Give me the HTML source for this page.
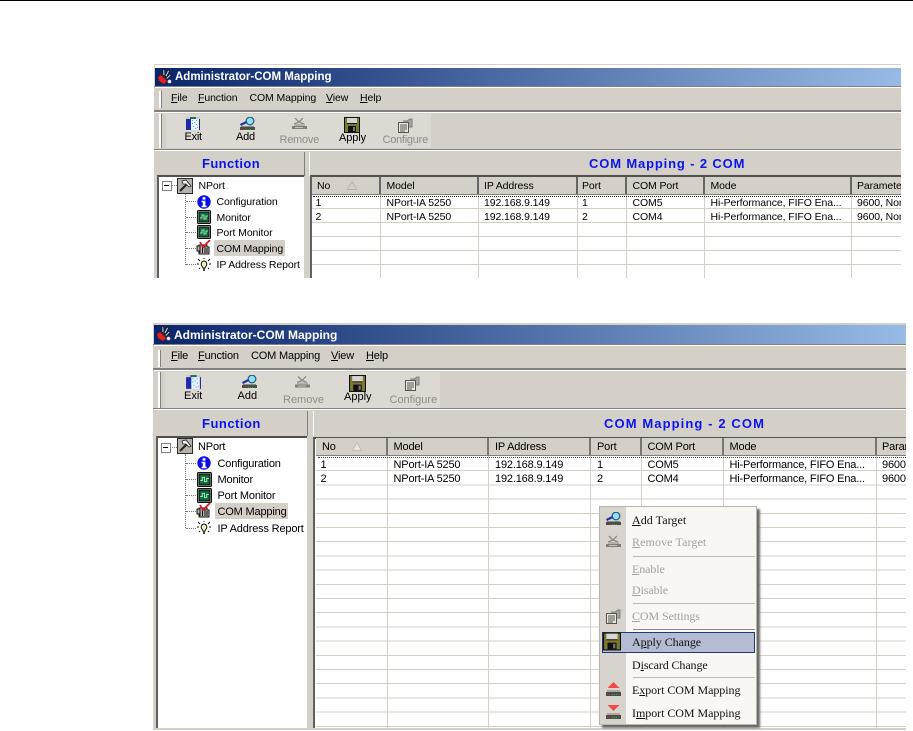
<!DOCTYPE html>
<html><head><meta charset="utf-8"><title>Administrator-COM Mapping</title>
<style>
html,body{margin:0;padding:0;background:#fff}
#p{position:relative;width:913px;height:731px;overflow:hidden;background:#fff;font-family:"Liberation Sans",sans-serif}
#p div{position:absolute}
.t{white-space:nowrap;font-size:10.5px;line-height:14px;color:#000;letter-spacing:-.1px;margin-top:1px}
.w2 .t{font-size:11px;letter-spacing:-.17px}
.g{color:#8f8d87}
.b{font-weight:bold;font-size:13px;line-height:16px;color:#0a14f0;white-space:nowrap}
.m{font-family:"Liberation Serif",serif;font-size:12px;line-height:14px;white-space:nowrap;color:#111}
.d{color:#a3a19c}
u{text-decoration-thickness:1px;text-underline-offset:1px}
svg{position:absolute;overflow:visible}
.w2{filter:blur(.35px)}
</style></head><body>
<div id="p">
<svg width="0" height="0" style="position:absolute">
<defs>
<symbol id="exit" viewBox="0 0 16 14"><rect x="1" y="0" width="14" height="2" fill="#cfccc5"/><rect x="5" y="0" width="6" height="2" fill="#1f6f57"/><rect x="1" y="2" width="5" height="11" fill="#1d2aa8"/><rect x="6" y="2" width="8" height="11" fill="#e6f3fb"/><path d="M7 3h1v1H7zM9 5h1v1H9zM7 6h1v1H7zM11 3h1v1h-1zM11 7h1v1h-1zM8 9h1v1H8zM12 10h1v1h-1zM10 11h1v1h-1z" fill="#59a5e0"/><rect x="14" y="2" width="1" height="11" fill="#1d1f9c"/></symbol>
<symbol id="add" viewBox="0 0 15 14"><circle cx="10" cy="4" r="3.800" fill="#8fe4ee" stroke="#255f92" stroke-width="1.300"/><path d="M0 7l6-3 1 2-6 3z" fill="#1c34a8"/><rect x="1" y="9" width="13" height="1" fill="#8b8a85"/><rect x="0" y="10" width="15" height="3" fill="#4c4c48"/><path d="M3 12h1v1H3z" fill="#e02020"/><path d="M6 12h1v1H6zM8 12h1v1H8zM10 12h1v1h-1z" fill="#22b522"/></symbol>
<symbol id="rem" viewBox="0 0 15 12"><path d="M3 0l4 4 4-4M2 6l5-2 5 2" fill="none" stroke="#8d8b86" stroke-width="1.300"/><rect x="2" y="6" width="11" height="2" fill="#b2b0aa"/><rect x="0" y="8" width="15" height="3" fill="#7f7e79"/><rect x="3" y="9" width="8" height="1" fill="#c4c2bc"/></symbol>
<symbol id="fl" viewBox="0 0 16 16"><rect x=".5" y=".5" width="15" height="15" fill="#7c7a2c" stroke="#111"/><rect x="3" y="1" width="10" height="6" fill="#d7d5cf"/><rect x="3" y="6" width="10" height="1" fill="#111"/><rect x="4" y="9" width="8" height="6" fill="#111"/><rect x="9" y="10" width="2" height="4" fill="#777"/></symbol>
<symbol id="cfg" viewBox="0 0 15 15"><path d="M5 3h4l3-2h2v8h-3" fill="#a8a6a0" stroke="#7f7e79"/><rect x=".5" y="4.500" width="10" height="10" fill="#e9e7e2" stroke="#55544e"/><path d="M2 7h7M2 9h7M2 11h7M2 13h5" stroke="#55544e"/></symbol>
<symbol id="np" viewBox="0 0 16 16"><rect x=".5" y=".5" width="15" height="15" fill="#b5b2ab" stroke="#2b2b2b"/><path d="M3 13L11 5" stroke="#222" stroke-width="2"/><path d="M5 3l4-1 5 6-2 1-3-3-3 0z" fill="#f4f4f0" stroke="#222" stroke-width=".8"/></symbol>
<symbol id="inf" viewBox="0 0 14 14"><circle cx="7" cy="7" r="6.700" fill="#0c10e8"/><rect x="5.600" y="2.200" width="2.800" height="2.400" fill="#fff"/><path d="M4.600 5.800h3.800v5h1.200v1.400H4.600v-1.400h1.200V7.200H4.600z" fill="#fff"/></symbol>
<symbol id="mon" viewBox="0 0 14 14"><rect x=".5" y=".5" width="13" height="13" rx="1" fill="#c4c2bc" stroke="#111"/><rect x="2" y="2" width="10" height="10" fill="#0b6a3c" stroke="#111"/><path d="M3 8h2V5h2v4h2V6h2" fill="none" stroke="#a6e0b0"/></symbol>
<symbol id="hand" viewBox="0 0 15 15"><path d="M1 6h2V5h8v2h2v7H3V11H1z" fill="#b9b6ae" stroke="#111"/><path d="M4 6v7M6.500 6v7M9 6v7M11 8v5" stroke="#111"/><path d="M4 2l3 5 7-7" fill="none" stroke="#e0101c" stroke-width="1.700"/></symbol>
<symbol id="bulb" viewBox="0 0 14 14"><path d="M7 3a3 3 0 0 1 2 5l-1 2H6L5 8a3 3 0 0 1 2-5z" fill="#fff" stroke="#111"/><path d="M6 5h2l-1 5z" fill="#f4ee20"/><rect x="6" y="10" width="2" height="3" fill="#444"/><path d="M7 0v1M1 1l2 2M13 1l-2 2M0 6h2M12 6h2M2 11l1-1M12 11l-1-1" stroke="#111"/></symbol>
<symbol id="logo" viewBox="0 0 15 15"><path d="M6 6l0-6 1.500 1 .5 6zM8 7l3-6 1.500 1-3 6zM9 9l4-4 1 1.500-4 4z" fill="#c8c8c8" stroke="#111" stroke-width=".6"/><path d="M1 8l3-2 6 6-3 3-5-3z" fill="#e8201c" stroke="#8a1010" stroke-width=".5"/><circle cx="12.500" cy="12.500" r="1.800" fill="#eee" stroke="#999" stroke-width=".4"/></symbol>
<symbol id="exp" viewBox="0 0 15 15"><path d="M7.500 0l6 6h-12z" fill="#f14848"/><rect x="1" y="8" width="13" height="2" fill="#aaa89f"/><rect x="0" y="10" width="15" height="4" fill="#4c4c48"/><path d="M3 12h1v1H3z" fill="#e02020"/><path d="M6 12h1v1H6zM8 12h1v1H8zM10 12h1v1h-1z" fill="#22b522"/></symbol>
<symbol id="imp" viewBox="0 0 15 15"><path d="M1.500 0h12l-6 6z" fill="#f14848"/><rect x="1" y="8" width="13" height="2" fill="#aaa89f"/><rect x="0" y="10" width="15" height="4" fill="#4c4c48"/><path d="M3 12h1v1H3z" fill="#e02020"/><path d="M6 12h1v1H6zM8 12h1v1H8zM10 12h1v1h-1z" fill="#22b522"/></symbol>
</defs></svg>

<div style="left:0;top:0;width:913px;height:1px;background:#000"></div>

<!-- WINDOW 1 -->
<div style="left:154px;top:64px;width:747px;height:214px;background:#d4d0c8;overflow:hidden">
 <div style="left:1px;top:1px;width:746px;height:3px;background:#fff"></div>
 <div style="left:1px;top:4px;width:746px;height:18px;background:linear-gradient(90deg,#0a246a,#98bbe5)"></div>
 <div class="t" style="left:21px;top:5px;color:#fff;font-weight:bold;font-size:11.500px;letter-spacing:0">Administrator-COM Mapping</div>
 <div style="left:0;top:22px;width:747px;height:1px;background:#808080"></div>
 <div style="left:1px;top:23px;width:746px;height:1px;background:#fff"></div>
 <div style="left:0;top:46px;width:747px;height:2px;background:#808080"></div>
 <div style="left:1px;top:48px;width:746px;height:1px;background:#fff"></div>
 <div style="left:5px;top:27px;width:2px;height:17px;background:#fff;border-right:1px solid #808080"></div>
 <div style="left:12px;top:50px;width:265px;height:34px;background:#dcd9d2"></div>
 <div style="left:5px;top:50px;width:2px;height:34px;background:#fff;border-right:1px solid #808080"></div>
 <div style="left:0;top:85px;width:747px;height:1px;background:#808080"></div>
 <div style="left:1px;top:86px;width:746px;height:1px;background:#fff"></div>
 <div style="left:150px;top:88px;width:1px;height:24px;background:#808080"></div>
 <div style="left:155px;top:88px;width:1px;height:24px;background:#fff"></div>
 <div style="left:3px;top:111px;width:147px;height:103px;background:#fff;border-top:2px solid #505050;border-left:2px solid #606060;box-sizing:border-box"></div>
 <div style="left:156px;top:111px;width:591px;height:103px;background:#fff;border-top:2px solid #505050;border-left:2px solid #606060;box-sizing:border-box"></div>
</div>
<div class="t" style="left:171px;top:90px"><u>F</u>ile</div>
<div class="t" style="left:198px;top:90px"><u>F</u>unction</div>
<div class="t" style="left:249.500px;top:90px">COM Mapping</div>
<div class="t" style="left:326px;top:90px"><u>V</u>iew</div>
<div class="t" style="left:360px;top:90px"><u>H</u>elp</div>
<svg style="left:157px;top:69px" width="15" height="15"><use href="#logo"/></svg>
<svg style="left:185px;top:117px" width="16" height="14"><use href="#exit"/></svg>
<svg style="left:240px;top:117px" width="15" height="14"><use href="#add"/></svg>
<svg style="left:292px;top:118px" width="15" height="12"><use href="#rem"/></svg>
<svg style="left:344px;top:117px" width="16" height="16"><use href="#fl"/></svg>
<svg style="left:398px;top:118px" width="15" height="15"><use href="#cfg"/></svg>
<div class="t" style="left:184.500px;top:129px;font-size:11px;letter-spacing:-.25px">Exit</div>
<div class="t" style="left:236px;top:129px;font-size:11px;letter-spacing:-.25px">Add</div>
<div class="t g" style="left:279.500px;top:132px;font-size:11px;letter-spacing:-.25px">Remove</div>
<div class="t" style="left:339px;top:130px;font-size:11px;letter-spacing:-.1px">Apply</div>
<div class="t g" style="left:382.500px;top:132px;font-size:11px;letter-spacing:-.25px">Configure</div>
<div class="b" style="left:202px;top:156px;letter-spacing:.4px">Function</div>
<div class="b" style="left:589px;top:156px;letter-spacing:.85px">COM Mapping - 2 COM</div>

<!-- tree 1 -->
<div style="left:185px;top:193px;width:0;height:72px;border-left:1px dotted #777"></div>
<div style="left:170px;top:185px;width:7px;border-top:1px dotted #777"></div>
<div style="left:186px;top:201px;width:10px;border-top:1px dotted #777"></div>
<div style="left:186px;top:217px;width:10px;border-top:1px dotted #777"></div>
<div style="left:186px;top:232px;width:10px;border-top:1px dotted #777"></div>
<div style="left:186px;top:248px;width:10px;border-top:1px dotted #777"></div>
<div style="left:186px;top:264px;width:10px;border-top:1px dotted #777"></div>
<div style="left:162px;top:181px;width:8px;height:8px;border:1px solid #808080;background:#fff"></div>
<div style="left:164px;top:185px;width:5px;height:1px;background:#000"></div>
<svg style="left:177px;top:178px" width="16" height="16"><use href="#np"/></svg>
<svg style="left:197px;top:195px" width="14" height="14"><use href="#inf"/></svg>
<svg style="left:197px;top:210px" width="14" height="14"><use href="#mon"/></svg>
<svg style="left:197px;top:225px" width="14" height="14"><use href="#mon"/></svg>
<svg style="left:196px;top:240px" width="15" height="15"><use href="#hand"/></svg>
<svg style="left:197px;top:258px" width="14" height="14"><use href="#bulb"/></svg>
<div style="left:214px;top:240px;width:71px;height:16px;background:#d4d0c8"></div>
<div class="t" style="left:216.500px;top:194px">Configuration</div>
<div class="t" style="left:216.500px;top:210px">Monitor</div>
<div class="t" style="left:216.500px;top:225px">Port Monitor</div>
<div class="t" style="left:216.500px;top:241px">COM Mapping</div>
<div class="t" style="left:216.500px;top:257px">IP Address Report</div>
<div class="t" style="left:198.500px;top:178px">NPort</div>

<!-- list 1 -->
<div style="left:312px;top:177px;width:589px;height:17px;background:#d4d0c8;border-bottom:1px solid #808080"></div>
<div style="left:379px;top:177px;width:2px;height:17px;background:#666"></div>
<div style="left:477px;top:177px;width:2px;height:17px;background:#666"></div>
<div style="left:576px;top:177px;width:2px;height:17px;background:#666"></div>
<div style="left:625px;top:177px;width:2px;height:17px;background:#666"></div>
<div style="left:703px;top:177px;width:2px;height:17px;background:#666"></div>
<div style="left:850px;top:177px;width:2px;height:17px;background:#666"></div>
<div style="left:312px;top:195px;width:589px;height:83px;background:repeating-linear-gradient(180deg,#fff 0,#fff 13px,#d4d0c8 13px,#d4d0c8 14px)"></div>
<div style="left:380px;top:195px;width:1px;height:83px;background:#d4d0c8"></div>
<div style="left:478px;top:195px;width:1px;height:83px;background:#d4d0c8"></div>
<div style="left:577px;top:195px;width:1px;height:83px;background:#d4d0c8"></div>
<div style="left:626px;top:195px;width:1px;height:83px;background:#d4d0c8"></div>
<div style="left:704px;top:195px;width:1px;height:83px;background:#d4d0c8"></div>
<div style="left:851px;top:195px;width:1px;height:83px;background:#d4d0c8"></div>
<div style="left:313px;top:196px;width:588px;border-top:1px dotted #222"></div>
<div class="t" style="left:317px;top:178px">No</div>
<svg style="left:347px;top:181px" width="10" height="9"><path d="M5 .500L9.500 8.500H.5z" fill="none" stroke="#b5b2ab"/></svg>
<div class="t" style="left:386.500px;top:178px">Model</div>
<div class="t" style="left:484px;top:178px">IP Address</div>
<div class="t" style="left:582px;top:178px">Port</div>
<div class="t" style="left:632.500px;top:178px">COM Port</div>
<div class="t" style="left:710.500px;top:178px">Mode</div>
<div class="t" style="left:857px;top:178px;width:44px;overflow:hidden">Parameters</div>
<div class="t" style="left:315.500px;top:195px">1</div>
<div class="t" style="left:386.500px;top:195px">NPort-IA 5250</div>
<div class="t" style="left:484px;top:195px">192.168.9.149</div>
<div class="t" style="left:582px;top:195px">1</div>
<div class="t" style="left:632.500px;top:195px">COM5</div>
<div class="t" style="left:710.500px;top:195px">Hi-Performance, FIFO Ena...</div>
<div class="t" style="left:857px;top:195px;width:44px;overflow:hidden">9600, None</div>
<div class="t" style="left:315.500px;top:209px">2</div>
<div class="t" style="left:386.500px;top:209px">NPort-IA 5250</div>
<div class="t" style="left:484px;top:209px">192.168.9.149</div>
<div class="t" style="left:582px;top:209px">2</div>
<div class="t" style="left:632.500px;top:209px">COM4</div>
<div class="t" style="left:710.500px;top:209px">Hi-Performance, FIFO Ena...</div>
<div class="t" style="left:857px;top:209px;width:44px;overflow:hidden">9600, None</div>

<!-- WINDOW 2 -->
<div class="w2" style="left:0;top:0;width:913px;height:731px">
<div style="left:153px;top:323px;width:753px;height:407px;background:#d4d0c8;overflow:hidden">
 <div style="left:1px;top:2px;width:752px;height:19px;background:linear-gradient(90deg,#0a246a,#98bbe5)"></div>
 <div class="t" style="left:21px;top:4px;color:#fff;font-weight:bold;font-size:12px;letter-spacing:0">Administrator-COM Mapping</div>
 <div style="left:0;top:21px;width:753px;height:1px;background:#808080"></div>
 <div style="left:1px;top:22px;width:752px;height:1px;background:#fff"></div>
 <div style="left:0;top:45px;width:753px;height:2px;background:#808080"></div>
 <div style="left:1px;top:47px;width:752px;height:1px;background:#fff"></div>
 <div style="left:5px;top:27px;width:2px;height:17px;background:#fff;border-right:1px solid #808080"></div>
 <div style="left:12px;top:49px;width:275px;height:36px;background:#dcd9d2"></div>
 <div style="left:5px;top:49px;width:2px;height:36px;background:#fff;border-right:1px solid #808080"></div>
 <div style="left:0;top:85px;width:753px;height:1px;background:#808080"></div>
 <div style="left:1px;top:86px;width:752px;height:1px;background:#fff"></div>
 <div style="left:154px;top:88px;width:1px;height:25px;background:#808080"></div>
 <div style="left:160px;top:88px;width:1px;height:25px;background:#fff"></div>
 <div style="left:3px;top:113px;width:151px;height:292px;background:#fff;border-top:2px solid #505050;border-left:2px solid #606060;box-sizing:border-box"></div>
 <div style="left:160px;top:114px;width:593px;height:291px;background:#fff;border-top:2px solid #505050;border-left:2px solid #606060;box-sizing:border-box"></div>
</div>
<div class="t" style="left:171px;top:348px"><u>F</u>ile</div>
<div class="t" style="left:198px;top:348px"><u>F</u>unction</div>
<div class="t" style="left:251px;top:348px">COM Mapping</div>
<div class="t" style="left:331px;top:348px"><u>V</u>iew</div>
<div class="t" style="left:366px;top:348px"><u>H</u>elp</div>
<svg style="left:156px;top:326px" width="15" height="15"><use href="#logo"/></svg>
<svg style="left:185px;top:375px" width="17" height="15"><use href="#exit"/></svg>
<svg style="left:242px;top:375px" width="15" height="14"><use href="#add"/></svg>
<svg style="left:295px;top:376px" width="15" height="13"><use href="#rem"/></svg>
<svg style="left:349px;top:375px" width="17" height="17"><use href="#fl"/></svg>
<svg style="left:405px;top:376px" width="15" height="15"><use href="#cfg"/></svg>
<div class="t" style="left:184px;top:388px;letter-spacing:0">Exit</div>
<div class="t" style="left:237.500px;top:388px;letter-spacing:0">Add</div>
<div class="t g" style="left:283px;top:391.500px;letter-spacing:0">Remove</div>
<div class="t" style="left:344px;top:389px;letter-spacing:0">Apply</div>
<div class="t g" style="left:389.500px;top:391.500px;letter-spacing:0">Configure</div>
<div class="b" style="left:202px;top:416px;letter-spacing:.5px">Function</div>
<div class="b" style="left:604px;top:416px;letter-spacing:1.100px">COM Mapping - 2 COM</div>

<div style="left:185px;top:454px;width:0;height:74px;border-left:1px dotted #777"></div>
<div style="left:169px;top:447px;width:8px;border-top:1px dotted #777"></div>
<div style="left:186px;top:463px;width:10px;border-top:1px dotted #777"></div>
<div style="left:186px;top:479px;width:10px;border-top:1px dotted #777"></div>
<div style="left:186px;top:495px;width:10px;border-top:1px dotted #777"></div>
<div style="left:186px;top:511px;width:10px;border-top:1px dotted #777"></div>
<div style="left:186px;top:528px;width:10px;border-top:1px dotted #777"></div>
<div style="left:161px;top:443px;width:8px;height:8px;border:1px solid #808080;background:#fff"></div>
<div style="left:163px;top:447px;width:5px;height:1px;background:#000"></div>
<svg style="left:177px;top:438px" width="16" height="16"><use href="#np"/></svg>
<svg style="left:197px;top:456px" width="14" height="14"><use href="#inf"/></svg>
<svg style="left:197px;top:472px" width="15" height="15"><use href="#mon"/></svg>
<svg style="left:197px;top:488px" width="15" height="15"><use href="#mon"/></svg>
<svg style="left:196px;top:503px" width="15" height="15"><use href="#hand"/></svg>
<svg style="left:197px;top:521px" width="14" height="14"><use href="#bulb"/></svg>
<div style="left:215px;top:503px;width:73px;height:16px;background:#d4d0c8"></div>
<div class="t" style="left:217.500px;top:456px">Configuration</div>
<div class="t" style="left:217.500px;top:472px">Monitor</div>
<div class="t" style="left:217.500px;top:488px">Port Monitor</div>
<div class="t" style="left:217.500px;top:504px">COM Mapping</div>
<div class="t" style="left:217.500px;top:521px">IP Address Report</div>
<div class="t" style="left:198px;top:439px">NPort</div>

<div style="left:316px;top:438px;width:590px;height:17px;background:#d4d0c8;border-bottom:1px solid #808080"></div>
<div style="left:386px;top:438px;width:2px;height:17px;background:#777"></div>
<div style="left:487px;top:438px;width:2px;height:17px;background:#777"></div>
<div style="left:589px;top:438px;width:2px;height:17px;background:#777"></div>
<div style="left:640px;top:438px;width:2px;height:17px;background:#777"></div>
<div style="left:722px;top:438px;width:2px;height:17px;background:#777"></div>
<div style="left:875px;top:438px;width:2px;height:17px;background:#777"></div>
<div style="left:316px;top:457px;width:590px;height:271px;background:repeating-linear-gradient(180deg,#fff 0,#fff 13.200px,#d4d0c8 13.200px,#d4d0c8 14.200px)"></div>
<div style="left:387px;top:456px;width:1px;height:272px;background:#d4d0c8"></div>
<div style="left:488px;top:456px;width:1px;height:272px;background:#d4d0c8"></div>
<div style="left:590px;top:456px;width:1px;height:272px;background:#d4d0c8"></div>
<div style="left:641px;top:456px;width:1px;height:272px;background:#d4d0c8"></div>
<div style="left:723px;top:456px;width:1px;height:272px;background:#d4d0c8"></div>
<div style="left:876px;top:456px;width:1px;height:272px;background:#d4d0c8"></div>
<div style="left:318px;top:457px;width:588px;border-top:1px dotted #444"></div>
<div class="t" style="left:322px;top:439px">No</div>
<svg style="left:352px;top:442px" width="10" height="9"><path d="M5 .500L9.500 8.500H.5z" fill="#e8e6e0" stroke="#c0bdb6"/></svg>
<div class="t" style="left:393.500px;top:439px">Model</div>
<div class="t" style="left:495px;top:439px">IP Address</div>
<div class="t" style="left:597px;top:439px">Port</div>
<div class="t" style="left:647.500px;top:439px">COM Port</div>
<div class="t" style="left:729.500px;top:439px">Mode</div>
<div class="t" style="left:882px;top:439px;width:24px;overflow:hidden">Parameters</div>
<div class="t" style="left:320.500px;top:457px">1</div>
<div class="t" style="left:393.500px;top:457px">NPort-IA 5250</div>
<div class="t" style="left:495px;top:457px">192.168.9.149</div>
<div class="t" style="left:597px;top:457px">1</div>
<div class="t" style="left:647.500px;top:457px">COM5</div>
<div class="t" style="left:729.500px;top:457px">Hi-Performance, FIFO Ena...</div>
<div class="t" style="left:882px;top:457px;width:24px;overflow:hidden">9600, None</div>
<div class="t" style="left:320.500px;top:471px">2</div>
<div class="t" style="left:393.500px;top:471px">NPort-IA 5250</div>
<div class="t" style="left:495px;top:471px">192.168.9.149</div>
<div class="t" style="left:597px;top:471px">2</div>
<div class="t" style="left:647.500px;top:471px">COM4</div>
<div class="t" style="left:729.500px;top:471px">Hi-Performance, FIFO Ena...</div>
<div class="t" style="left:882px;top:471px;width:24px;overflow:hidden">9600, None</div>

<!-- context menu -->
<div style="left:599px;top:506px;width:158px;height:219px;background:#f8f7f4;border:1px solid #b8b5ae;box-sizing:border-box;box-shadow:3px 3px 2px #6a6a66"></div>
<div style="left:600px;top:507px;width:26px;height:217px;background:#d8d4cd"></div>
<div style="left:633px;top:556px;width:122px;height:1px;background:#bdbab3"></div>
<div style="left:633px;top:603px;width:122px;height:1px;background:#bdbab3"></div>
<div style="left:633px;top:629px;width:122px;height:1px;background:#8b8a85"></div>
<div style="left:633px;top:677px;width:122px;height:1px;background:#bdbab3"></div>
<div style="left:602px;top:632px;width:153px;height:21px;background:#b3bcd3;border:1px solid #1f3a73;box-sizing:border-box"></div>
<svg style="left:606px;top:512px" width="15" height="14"><use href="#add"/></svg>
<svg style="left:606px;top:535px" width="15" height="14"><use href="#rem"/></svg>
<svg style="left:606px;top:609px" width="15" height="15"><use href="#cfg"/></svg>
<svg style="left:603px;top:632px" width="18" height="19"><use href="#fl"/></svg>
<svg style="left:606px;top:682px" width="15" height="15"><use href="#exp"/></svg>
<svg style="left:606px;top:705px" width="15" height="15"><use href="#imp"/></svg>
<div class="m" style="left:632px;top:513px;letter-spacing:.05px"><u>A</u>dd Target</div>
<div class="m d" style="left:632px;top:535px;letter-spacing:.1px"><u>R</u>emove Target</div>
<div class="m d" style="left:632px;top:562px;letter-spacing:-.1px"><u>E</u>nable</div>
<div class="m d" style="left:632px;top:583px;letter-spacing:-.1px"><u>D</u>isable</div>
<div class="m d" style="left:632px;top:609px;letter-spacing:-.1px"><u>C</u>OM Settings</div>
<div class="m" style="left:632px;top:635px;letter-spacing:-.05px">A<u>p</u>ply Change</div>
<div class="m" style="left:632px;top:658px;letter-spacing:-.1px">D<u>i</u>scard Change</div>
<div class="m" style="left:632px;top:683px;letter-spacing:-.05px">E<u>x</u>port COM Mapping</div>
<div class="m" style="left:632px;top:706px;letter-spacing:-.05px">I<u>m</u>port COM Mapping</div>
</div>
</div>
</body></html>
